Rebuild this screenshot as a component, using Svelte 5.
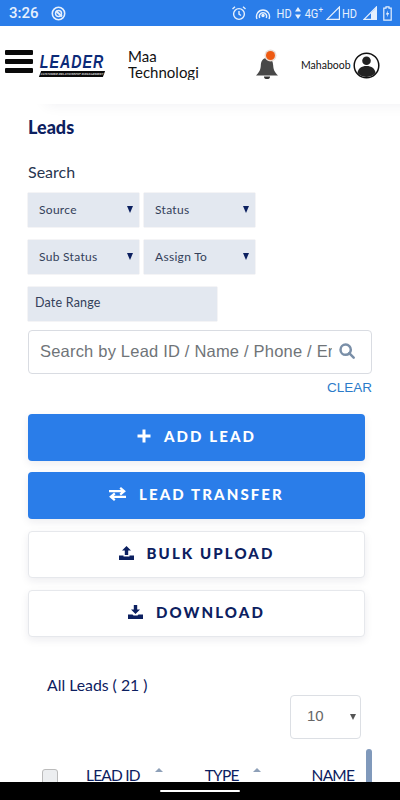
<script>
	const filters = [
		["Source", "Status"],
		["Sub Status", "Assign To"]
	];
</script>

<div class="phone">
	<div class="statusbar">
		<span class="time">3:26</span>
		<svg class="sb-app" width="15" height="15" viewBox="0 0 15 15" fill="none" stroke="#e6f0fd">
			<circle cx="7.5" cy="7.5" r="6.2" stroke-width="1.6" />
			<circle cx="7.5" cy="7.5" r="3" stroke-width="1.5" />
			<path d="M5 5l6 5.5" stroke-width="2" />
		</svg>
		<span class="sb-right">
			<svg width="16" height="16" viewBox="0 0 16 16" fill="none" stroke="#e6f0fd" stroke-width="1.4">
				<circle cx="8" cy="9" r="5.4" />
				<path d="M8 6v3.2l2 1.3M1.5 4L4 1.8M14.5 4L12 1.8" />
			</svg>
			<svg class="gap1" width="16" height="14" viewBox="0 0 16 14" fill="none" stroke="#e6f0fd" stroke-width="1.4">
				<path d="M2 13a6.5 6.5 0 1 1 12 0M4.8 12a3.6 3.6 0 1 1 6.4 0" />
				<circle cx="8" cy="9.5" r="1" fill="#e6f0fd" />
			</svg>
			<span class="sb-text gap2">HD</span>
			<svg class="gap3" width="6" height="12" viewBox="0 0 6 12" fill="#e6f0fd"><path d="M3 0l3 4.6H0zM3 12L0 7.4h6z" /></svg>
			<span class="sb-text gap4">4G<sup>+</sup></span>
			<svg class="gap3" width="14" height="14" viewBox="0 0 14 14" fill="none" stroke="#e6f0fd" stroke-width="1.2"><path d="M1 13.4L13.4 1v12.4z" /></svg>
			<span class="sb-text hd2">HD</span>
			<svg class="gap2" width="14" height="14" viewBox="0 0 14 14" fill="none" stroke="#e6f0fd" stroke-width="1.2"><path d="M1 13.4L13.4 1v12.4z" /><path d="M8 7v6h5.4V2z" fill="#e6f0fd" stroke="none" /></svg>
			<svg class="gap2" width="9" height="15" viewBox="0 0 9 15" fill="none" stroke="#e6f0fd" stroke-width="1.2">
				<path d="M3 .8h3v1.4h2.2v12H.8v-12H3z" />
				<path d="M5 4.2L2.8 8.4h1.6L3.8 11.6 6.2 7H4.6z" fill="#e6f0fd" stroke="none" />
			</svg>
		</span>
	</div>

	<header class="topbar">
		<div class="burger"><i></i><i></i><i></i></div>
		<div class="logo">
			<span class="logo-word">LEADER</span>
			<span class="logo-tag">CUSTOMER RELATIONSHIP MANAGEMENT</span>
		</div>
		<div class="company">Maa Technologies</div>
		<div class="bell">
			<svg width="24" height="30" viewBox="0 0 24 30">
				<path d="M12 7c-4.4 0-6 3.4-6.200 7.500C5.600 18.500 4.500 21 1 24.500h22c-3.500-3.500-4.600-6-4.800-10C18 10.400 16.400 7 12 7z" fill="#484848" />
				<path d="M9 25.500h6a3 2.600 0 0 1-6 0z" fill="#333" />
			</svg>
			<span class="bell-dot"></span>
		</div>
		<span class="user">Mahaboob</span>
		<svg class="avatar" width="27" height="27" viewBox="0 0 27 27">
			<circle cx="13.500" cy="13.500" r="12.300" fill="#fff" stroke="#111" stroke-width="1.500" />
			<circle cx="13.500" cy="8.800" r="4.300" fill="#222" />
			<path d="M4.500 21c.5-4.800 4-7 9-7s8.500 2.200 9 7a12 12 0 0 1-18 0z" fill="#222" />
		</svg>
	</header>

	<main class="content">
		<h1>Leads</h1>
		<div class="search-label">Search</div>

		{#each filters as row}
			<div class="filter-row">
				{#each row as f}
					<div class="select"><span>{f}</span><b class="caret"></b></div>
				{/each}
			</div>
		{/each}
		<div class="date">Date Range</div>

		<div class="search-box">
			<span class="placeholder">Search by Lead ID / Name / Phone / Email</span>
			<svg width="16" height="16" viewBox="0 0 18 18" fill="none" stroke="#7a8fa8" stroke-width="2.800">
				<circle cx="7.500" cy="7.500" r="5.800" />
				<path d="M11.500 11.500l5 5" stroke-linecap="round" />
			</svg>
		</div>
		<div class="clear">CLEAR</div>

		<div class="actions">
			<button class="btn primary">
				<svg width="14" height="14" viewBox="0 0 14 14" fill="none" stroke="#fff" stroke-width="3"><path d="M7 0.500v13M0.500 7h13" /></svg>
				ADD LEAD
			</button>
			<button class="btn primary">
				<svg width="17" height="14" viewBox="0 0 17 14" fill="none" stroke="#fff" stroke-width="2.200">
					<path d="M0 4.200h15M11.200 .8l4 3.400-4 3.400M17 9.800H2M5.800 6.400l-4 3.400 4 3.400" />
				</svg>
				LEAD TRANSFER
			</button>
			<button class="btn plain">
				<svg width="15" height="14" viewBox="0 0 15 14" fill="#0c2060">
					<path d="M7.500 0l4.500 4.500H9.200V9H5.800V4.500H3zM0 9.500h4.500v1h6v-1H15V14H0z" />
				</svg>
				BULK UPLOAD
			</button>
			<button class="btn plain">
				<svg width="15" height="14" viewBox="0 0 15 14" fill="#0c2060">
					<path d="M5.800 0h3.400v4.500H12L7.500 9 3 4.500h2.800zM0 9.500h4.500l1 1h4l1-1H15V14H0z" />
				</svg>
				DOWNLOAD
			</button>
		</div>

		<div class="all-leads">All Leads ( 21 )</div>
		<div class="page-size-row">
			<div class="page-size"><span>10</span><b class="caret small"></b></div>
		</div>

		<div class="table-head">
			<span class="check"></span>
			<span class="col col-id">LEAD ID<i class="sort"></i></span>
			<span class="col col-type">TYPE<i class="sort"></i></span>
			<span class="col col-name">NAME</span>
		</div>
		<span class="scroll-thumb"></span>
	</main>

	<div class="navbar"><span class="pill"></span></div>
</div>

<style>
	:global(body) {
		margin: 0;
		background: #fff;
	}
	.phone {
		width: 400px;
		height: 800px;
		display: flex;
		flex-direction: column;
		overflow: hidden;
		font-family: Lato, "Open Sans", sans-serif;
		color: #0c2060;
	}

	/* status bar */
	.statusbar {
		height: 26px;
		flex: none;
		background: #2a7de9;
		display: flex;
		align-items: center;
		padding: 0 8px 0 9px;
		color: #e6f0fd;
	}
	.time {
		font: 15px Roboto, sans-serif;
		font-weight: 500;
	}
	.sb-app {
		margin-left: 12px;
	}
	.sb-right {
		margin-left: auto;
		display: flex;
		align-items: center;
	}
	.sb-text {
		font: 11px Roboto, sans-serif;
		transform: scaleY(1.15);
		display: flex;
	}
	.sb-text sup {
		font-size: 8px;
		line-height: 8px;
	}
	.gap1 {
		margin-left: 8px;
	}
	.gap2 {
		margin-left: 6px;
	}
	.gap3 {
		margin-left: 3px;
	}
	.gap4 {
		margin-left: 4px;
	}
	.hd2 {
		margin-left: 2px;
	}

	/* top bar */
	.topbar {
		height: 78px;
		flex: none;
		display: flex;
		align-items: center;
		padding-left: 5px;
		position: relative;
		box-shadow: 40px 6px 14px -6px rgba(20, 30, 70, 0.07);
	}
	.burger {
		width: 28px;
		height: 23px;
		display: flex;
		flex-direction: column;
		justify-content: space-between;
		margin-bottom: 7px;
		flex: none;
	}
	.burger i {
		height: 5px;
		background: #0a0a0a;
		border-radius: 1px;
	}
	.logo {
		width: 64px;
		margin-left: 7px;
		display: flex;
		flex-direction: column;
		align-items: center;
		margin-top: 1px;
		flex: none;
	}
	.logo-word {
		font: italic 700 14.200px/15px "Liberation Sans", sans-serif;
		letter-spacing: 1px;
		color: #0b2a78;
		transform: scaleY(1.35);
	}
	.logo-tag {
		width: 100%;
		height: 6px;
		background: #0a0a0a;
		color: #ddd;
		font: 700 3px/6px "Liberation Sans", sans-serif;
		text-align: center;
		white-space: nowrap;
		overflow: hidden;
		transform: skewX(-20deg);
		margin-top: 2px;
	}
	.company {
		width: 71px;
		margin-left: 24px;
		font-size: 15px;
		line-height: 16px;
		color: #111;
		overflow: hidden;
		height: 32px;
		flex: none;
		margin-bottom: 3px;
	}
	.bell {
		position: relative;
		width: 24px;
		height: 30px;
		margin-left: 56px;
		flex: none;
		margin-top: 2px;
	}
	.bell-dot {
		position: absolute;
		top: 0;
		left: 11px;
		width: 9px;
		height: 9px;
		background: #ee5a12;
		border-radius: 50%;
		box-shadow: 0 0 0 1.500px #eadcd4;
	}
	.user {
		margin-left: 22px;
		font-size: 10.500px;
		color: #111;
		width: 50px;
		flex: none;
	}
	.avatar {
		margin-left: 2px;
		flex: none;
	}

	/* filters */
	.content {
		flex: 1;
		min-height: 0;
		position: relative;
		padding: 0 28px;
		overflow: hidden;
	}
	h1 {
		margin: 13px 0 0;
		font-size: 18px;
		line-height: 21px;
		font-weight: 900;
		color: #0c2060;
	}
	.search-label {
		margin-top: 24px;
		font-size: 16px;
		line-height: 20px;
		color: #27354f;
		margin-bottom: 11px;
	}
	.filter-row {
		display: flex;
		gap: 5px;
		margin-bottom: 13px;
	}
	.select {
		width: 111px;
		height: 34px;
		background: #e3e8f0;
		display: flex;
		align-items: center;
		justify-content: space-between;
		box-sizing: border-box;
		padding: 0 6px 2px 11px;
		font-size: 12px;
		color: #33405a;
		letter-spacing: 0.3px;
		box-shadow: 0 0 1px rgba(40, 50, 80, 0.3);
	}
	.caret {
		width: 0;
		height: 0;
		border-left: 3.500px solid transparent;
		border-right: 3.500px solid transparent;
		border-top: 7px solid #0c2060;
	}
	.caret.small {
		border-left-width: 3px;
		border-right-width: 3px;
		border-top: 6px solid #555;
		margin-top: 3px;
	}
	.date {
		width: 189px;
		height: 34px;
		background: #e3e8f0;
		box-sizing: border-box;
		padding: 0 0 3px 7px;
		display: flex;
		align-items: center;
		font-size: 12.500px;
		color: #33405a;
		letter-spacing: 0.2px;
		box-shadow: 0 0 1px rgba(40, 50, 80, 0.3);
	}

	/* search */
	.search-box {
		margin-top: 9px;
		width: 344px;
		height: 44px;
		box-sizing: border-box;
		border: 1px solid #d9dce2;
		border-radius: 4px;
		display: flex;
		align-items: center;
		padding: 0 16px 0 11px;
		gap: 7px;
	}
	.placeholder {
		flex: 1;
		overflow: hidden;
		white-space: nowrap;
		font: 16.500px "Liberation Sans", sans-serif;
		letter-spacing: 0.2px;
		color: #6f7478;
		margin-bottom: 2px;
	}
	.search-box svg {
		flex: none;
		margin-bottom: 2px;
	}
	.clear {
		width: 344px;
		text-align: right;
		margin-top: 6px;
		font: 13.500px/16px "Liberation Sans", sans-serif;
		color: #2b7bc9;
	}

	/* buttons */
	.actions {
		margin-top: 18px;
		width: 337px;
		display: flex;
		flex-direction: column;
		gap: 11px;
	}
	.btn {
		height: 47px;
		border-radius: 4px;
		display: flex;
		align-items: center;
		justify-content: center;
		gap: 13px;
		font-family: Lato, sans-serif;
		font-weight: 900;
		font-size: 15px;
		letter-spacing: 2.100px;
		padding: 0 0 3px;
		box-shadow: 0 3px 8px rgba(20, 30, 70, 0.08);
	}
	.primary {
		background: #2a7de9;
		color: #fff;
		border: none;
	}
	.plain {
		background: #fff;
		color: #0c2060;
		border: 1px solid #e6e8ec;
		margin-top: 1px;
	}

	/* table */
	.all-leads {
		margin: 38px 0 0 19px;
		font-size: 15.800px;
		line-height: 20px;
		color: #0c2060;
	}
	.page-size-row {
		display: flex;
		justify-content: flex-end;
		width: 333px;
	}
	.page-size {
		width: 71px;
		height: 44px;
		box-sizing: border-box;
		border: 1px solid #dcdfe4;
		border-radius: 4px;
		display: flex;
		align-items: center;
		justify-content: space-between;
		padding: 0 4px 3px 16px;
		font: 15px "Liberation Sans", sans-serif;
		color: #666;
	}
	.table-head {
		margin: 26px 0 0 14px;
		display: flex;
		align-items: flex-start;
		height: 22px;
		font-size: 15.500px;
		line-height: 20px;
		white-space: nowrap;
	}
	.check {
		width: 16px;
		height: 16px;
		background: #eceef0;
		border: 1px solid #bbb;
		border-radius: 3px;
		flex: none;
		margin-top: 4px;
		box-sizing: border-box;
	}
	.col {
		position: relative;
		letter-spacing: -0.8px;
		flex: none;
	}
	.col-id {
		margin-left: 28px;
	}
	.col-type {
		margin-left: 65px;
	}
	.col-name {
		margin-left: 73px;
	}
	.sort {
		position: absolute;
		right: -23px;
		top: 3px;
		width: 0;
		height: 0;
		border-left: 4px solid transparent;
		border-right: 4px solid transparent;
		border-bottom: 4px solid #8ea0b8;
	}
	.col-type .sort {
		right: -22px;
	}
	.scroll-thumb {
		position: absolute;
		left: 366px;
		top: 645px;
		width: 6px;
		height: 40px;
		border-radius: 3px;
		background: #8099bb;
	}

	/* android nav */
	.navbar {
		height: 18px;
		flex: none;
		background: #000;
		display: flex;
		justify-content: center;
		align-items: center;
	}
	.pill {
		width: 80px;
		height: 2.500px;
		background: #fff;
		border-radius: 2px;
	}
</style>
